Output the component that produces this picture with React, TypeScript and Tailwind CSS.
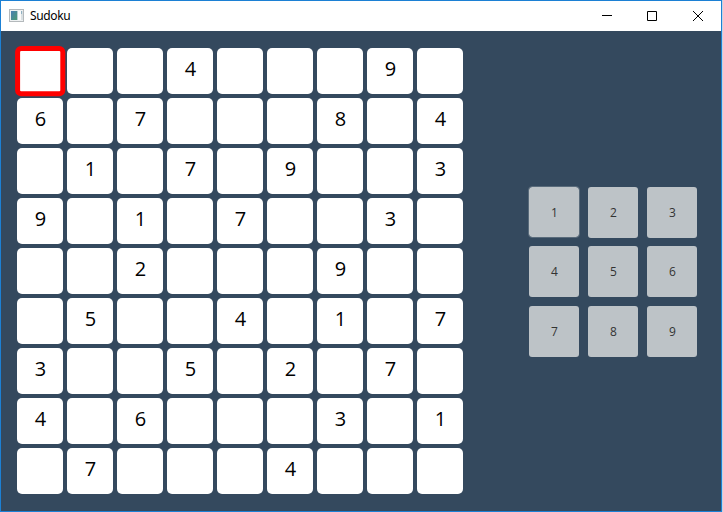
const puzzle = [
  '...4...9.',
  '6.7...8.4',
  '.1.7.9..3',
  '9.1.7..3.',
  '..2...9..',
  '.5..4.1.7',
  '3..5.2.7.',
  '4.6...3.1',
  '.7...4...',
];

const keys = [
  ['1', '2', '3'],
  ['4', '5', '6'],
  ['7', '8', '9'],
];

function AppIcon() {
  return (
    <svg width="16" height="14" viewBox="0 0 16 14" className="ml-2 -mt-px">
      <defs>
        <linearGradient id="pane" x1="0" y1="0" x2="1" y2="1">
          <stop offset="0" stopColor="#4a7db5" />
          <stop offset="1" stopColor="#4c9a72" />
        </linearGradient>
      </defs>
      <rect x="0.5" y="0.5" width="14" height="12" fill="#eef1f2" stroke="#b4b9bc" />
      <rect x="2" y="2" width="6" height="9" fill="url(#pane)" />
      <rect x="8" y="2" width="1" height="9" fill="#b6ccd3" />
      <rect x="9" y="2" width="3" height="9" fill="#fafafa" />
      <rect x="12" y="2" width="2" height="9" fill="#d9e0e3" />
      <rect x="12" y="2" width="1" height="3" fill="#8fb0c2" />
    </svg>
  );
}

function TitleBar() {
  return (
    <header className="flex h-[30px] shrink-0 items-center bg-white">
      <AppIcon />
      <h1 className="ml-[5px] text-[12px] leading-4 tracking-[-0.35px] text-black">Sudoku</h1>
      <div className="ml-auto flex text-black">
        {['M1 4.5H11', 'M0.5 0.5H9.5V9.5H0.5Z', 'M0 0L10 10M10 0L0 10'].map((d) => (
          <button key={d} className="flex h-[29px] w-[46px] items-center justify-center">
            <svg
              width="10"
              height="10"
              viewBox="0 0 10 10"
              fill="none"
              stroke="currentColor"
              className="overflow-visible"
            >
              <path d={d} />
            </svg>
          </button>
        ))}
      </div>
    </header>
  );
}

function Cell({ value, selected }: { value: string; selected: boolean }) {
  return (
    <div className="relative flex size-[46px] items-center justify-center rounded-[5px] bg-white pb-[5px] pl-px font-['Open_Sans','Noto_Sans',sans-serif] text-[20px] leading-none text-black">
      {value === '.' ? '' : value}
      {selected && (
        <svg
          className="absolute inset-0 overflow-visible"
          width="46"
          height="46"
          fill="none"
          stroke="#ff0000"
          strokeWidth="5"
        >
          <rect x="0.6" y="0.6" width="45.2" height="45.2" rx="3.5" />
        </svg>
      )}
    </div>
  );
}

export default function App() {
  return (
    <div className="h-[512px] w-[723px] bg-[#c3d5e4] pr-px font-['Noto_Sans','Open_Sans',sans-serif]">
      <div className="flex h-full flex-col border border-[#1c80d4]">
        <TitleBar />
        <main className="flex flex-1 items-start bg-[#34495e] pl-4">
          <div className="mt-[17px] grid grid-cols-[repeat(9,46px)] gap-1">
            {puzzle.flatMap((row, r) =>
              row.split('').map((value, c) => (
                <Cell key={`${r}-${c}`} value={value} selected={r === 0 && c === 0} />
              )),
            )}
          </div>
          <div className="mt-[156px] ml-[66px] grid grid-cols-[repeat(3,50px)] grid-rows-[59px_60px_51px] gap-x-[9px]">
            {keys.flat().map((key) => (
              <button
                key={key}
                className={
                  "flex w-[50px] items-center justify-center rounded-[3px] bg-[#bdc3c7] pl-px font-['Open_Sans','Noto_Sans',sans-serif] text-[12px] leading-none text-[#333333]" +
                  (key === '1' ? ' h-[50px] pt-px outline-1 outline-[#596b7b]' : ' h-[51px]')
                }
              >
                {key}
              </button>
            ))}
          </div>
        </main>
      </div>
    </div>
  );
}
